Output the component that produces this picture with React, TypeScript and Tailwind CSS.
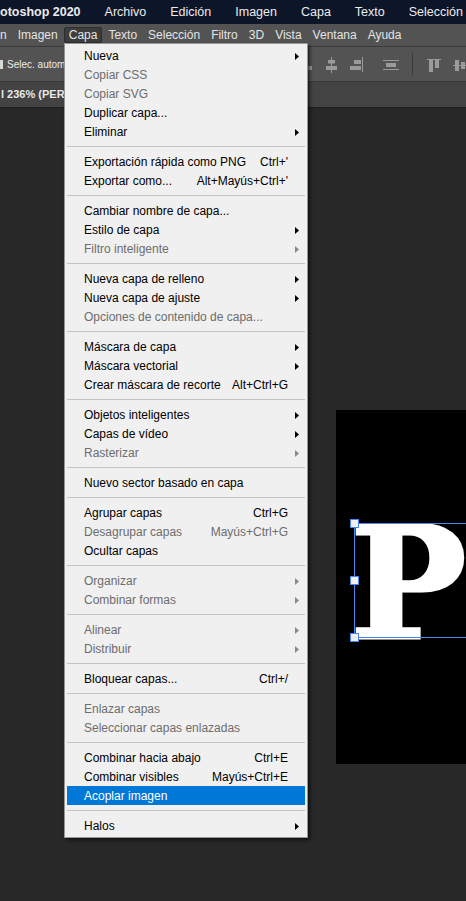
import React from "react";

type Entry =
  | { sep: true }
  | { label: string; shortcut?: string; arrow?: boolean; disabled?: boolean; active?: boolean };

const S: Entry = { sep: true };

const items: Entry[] = [
  { label: "Nueva", arrow: true },
  { label: "Copiar CSS", disabled: true },
  { label: "Copiar SVG", disabled: true },
  { label: "Duplicar capa..." },
  { label: "Eliminar", arrow: true },
  S,
  { label: "Exportación rápida como PNG", shortcut: "Ctrl+'" },
  { label: "Exportar como...", shortcut: "Alt+Mayús+Ctrl+'" },
  S,
  { label: "Cambiar nombre de capa..." },
  { label: "Estilo de capa", arrow: true },
  { label: "Filtro inteligente", arrow: true, disabled: true },
  S,
  { label: "Nueva capa de relleno", arrow: true },
  { label: "Nueva capa de ajuste", arrow: true },
  { label: "Opciones de contenido de capa...", disabled: true },
  S,
  { label: "Máscara de capa", arrow: true },
  { label: "Máscara vectorial", arrow: true },
  { label: "Crear máscara de recorte", shortcut: "Alt+Ctrl+G" },
  S,
  { label: "Objetos inteligentes", arrow: true },
  { label: "Capas de vídeo", arrow: true },
  { label: "Rasterizar", arrow: true, disabled: true },
  S,
  { label: "Nuevo sector basado en capa" },
  S,
  { label: "Agrupar capas", shortcut: "Ctrl+G" },
  { label: "Desagrupar capas", shortcut: "Mayús+Ctrl+G", disabled: true },
  { label: "Ocultar capas" },
  S,
  { label: "Organizar", arrow: true, disabled: true },
  { label: "Combinar formas", arrow: true, disabled: true },
  S,
  { label: "Alinear", arrow: true, disabled: true },
  { label: "Distribuir", arrow: true, disabled: true },
  S,
  { label: "Bloquear capas...", shortcut: "Ctrl+/" },
  S,
  { label: "Enlazar capas", disabled: true },
  { label: "Seleccionar capas enlazadas", disabled: true },
  S,
  { label: "Combinar hacia abajo", shortcut: "Ctrl+E" },
  { label: "Combinar visibles", shortcut: "Mayús+Ctrl+E" },
  { label: "Acoplar imagen", active: true },
  S,
  { label: "Halos", arrow: true },
];

const titleItems = ["Archivo", "Edición", "Imagen", "Capa", "Texto", "Selección"];
const menuItems = ["Texto", "Selección", "Filtro", "3D", "Vista", "Ventana", "Ayuda"];

function Arrow({ color }: { color: string }) {
  return (
    <svg width="4" height="7" viewBox="0 0 4 7" className="ml-[7px]">
      <polygon points="0,0 4,3.5 0,7" fill={color} />
    </svg>
  );
}

function LayerMenu() {
  return (
    <div className="absolute left-[64px] top-[43px] w-[244px] border border-[#979797] bg-[#f0f0f0] p-[2px] shadow-[2px_2px_3px_rgba(0,0,0,0.6)]">
      {items.map((it, i) => {
        if ("sep" in it) {
          return (
            <div key={i} className="flex h-[11px] items-center">
              <div className="h-px w-full bg-[#c4c4c4]" />
            </div>
          );
        }
        const color = it.active ? "text-white" : it.disabled ? "text-[#6d6d6d]" : "text-black";
        return (
          <div
            key={i}
            className={`flex h-[19px] items-center pl-[17px] pt-px text-[12px] leading-none ${color} ${
              it.active ? "bg-[#0078d7]" : ""
            }`}
          >
            <span className="flex-1 whitespace-nowrap">{it.label}</span>
            {it.shortcut && <span className="whitespace-nowrap">{it.shortcut}</span>}
            <span className="flex w-[17px] items-center">
              {it.arrow && <Arrow color={it.disabled ? "#8a8a8a" : "#000000"} />}
            </span>
          </div>
        );
      })}
    </div>
  );
}

function AlignIcons() {
  return (
    <svg width="170" height="34" viewBox="0 0 170 34" className="shrink-0">
      <g fill="#9a9a9a">
        <rect x="10" y="13" width="2" height="4" />
        <rect x="8" y="19" width="8" height="4" />
        <rect x="35" y="10" width="1" height="16" />
        <rect x="32" y="13" width="7" height="3.5" />
        <rect x="30" y="19" width="11" height="4" />
        <rect x="66" y="10" width="1" height="15" />
        <rect x="58" y="13" width="7" height="4" />
        <rect x="54" y="19" width="11" height="4" />
        <rect x="87" y="13" width="16" height="1" />
        <rect x="90" y="16" width="10" height="4" />
        <rect x="87" y="22" width="16" height="1" />
        <rect x="131" y="12" width="14" height="1" />
        <rect x="133" y="13" width="4" height="12" />
        <rect x="139" y="13" width="4" height="8" />
        <rect x="157" y="18" width="13" height="1" />
        <rect x="159" y="13" width="4" height="11" />
        <rect x="165" y="15" width="4" height="7" />
      </g>
      <rect x="116" y="6" width="1" height="22" fill="#3a3a3a" />
    </svg>
  );
}

export default function App() {
  return (
    <div
      className="relative flex h-[901px] w-[466px] flex-col overflow-hidden bg-[#282828]"
      style={{ fontFamily: '"Liberation Sans", Arial, sans-serif' }}
    >
      {/* barra de título */}
      <div className="flex h-[24px] shrink-0 items-center gap-[24px] whitespace-nowrap bg-[#0d1628] text-[12.5px] text-[#ececec]">
        <span className="font-bold">otoshop 2020</span>
        {titleItems.map((t) => (
          <span key={t}>{t}</span>
        ))}
      </div>

      {/* menú */}
      <div className="flex h-[22px] shrink-0 items-center gap-[1px] whitespace-nowrap bg-[#535353] text-[12px] text-[#e4e4e4]">
        <span className="pr-[5px]">n</span>
        <span className="px-[5px]">Imagen</span>
        <span className="flex h-[16px] items-center rounded-[2px] border border-[#2e2e2e] bg-[#3c3c3c] px-[4px]">
          Capa
        </span>
        {menuItems.map((t) => (
          <span key={t} className="px-[5px]">
            {t}
          </span>
        ))}
      </div>

      {/* opciones */}
      <div className="flex h-[35px] shrink-0 items-center border-t border-[#3a3a3a] bg-[#535353]">
        <div className="h-[9px] w-[3px] bg-[#d8d8d8]" />
        <span className="ml-[4px] whitespace-nowrap text-[10px] text-[#ededed]">Selec. autom</span>
        <div className="ml-auto">
          <AlignIcons />
        </div>
      </div>

      {/* pestaña del documento */}
      <div className="flex h-[26px] shrink-0 items-center border-t border-[#3a3a3a] bg-[#434343] pl-[1px] text-[11px] font-bold text-[#e8e8e8]">
        <span className="whitespace-nowrap">l 236% (PERLA</span>
      </div>

      {/* área de trabajo */}
      <div className="flex-1 border-t border-[#1e1e1e]">
        <div className="relative ml-[336px] mt-[302px] h-[354px] w-[130px] overflow-hidden bg-black">
          <span
            className="absolute left-[14px] top-[96px] text-[155px] font-bold leading-none text-white"
            style={{ fontFamily: '"DejaVu Serif", serif', WebkitTextStroke: "3px white" }}
          >
            P
          </span>
          <div className="absolute left-[18px] top-[113px] h-[115px] w-[200px] border border-[#4a84f0]" />
          <div className="absolute left-[14px] top-[109px] h-[9px] w-[9px] border border-[#4a84f0] bg-[#f0f0f0]" />
          <div className="absolute left-[14px] top-[166px] h-[9px] w-[9px] border border-[#4a84f0] bg-[#f0f0f0]" />
          <div className="absolute left-[14px] top-[223px] h-[9px] w-[9px] border border-[#4a84f0] bg-[#f0f0f0]" />
        </div>
      </div>

      <LayerMenu />
    </div>
  );
}
